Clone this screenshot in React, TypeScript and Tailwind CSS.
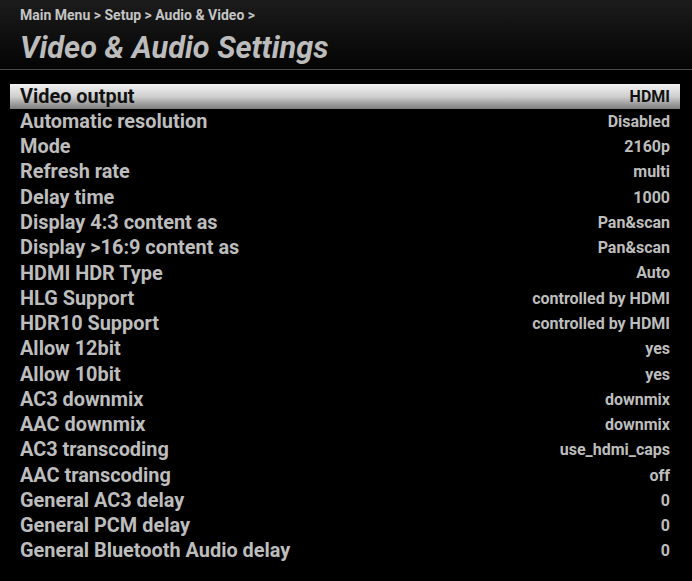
const rows: [string, string][] = [
  ["Video output", "HDMI"],
  ["Automatic resolution", "Disabled"],
  ["Mode", "2160p"],
  ["Refresh rate", "multi"],
  ["Delay time", "1000"],
  ["Display 4:3 content as", "Pan&scan"],
  ["Display >16:9 content as", "Pan&scan"],
  ["HDMI HDR Type", "Auto"],
  ["HLG Support", "controlled by HDMI"],
  ["HDR10 Support", "controlled by HDMI"],
  ["Allow 12bit", "yes"],
  ["Allow 10bit", "yes"],
  ["AC3 downmix", "downmix"],
  ["AAC downmix", "downmix"],
  ["AC3 transcoding", "use_hdmi_caps"],
  ["AAC transcoding", "off"],
  ["General AC3 delay", "0"],
  ["General PCM delay", "0"],
  ["General Bluetooth Audio delay", "0"],
];

export default function App() {
  return (
    <div className="w-[692px] h-[581px] bg-black overflow-hidden font-['Roboto',sans-serif]">
      <div className="h-[70px] bg-gradient-to-b from-[#1c1c1c] to-[#050505] border-b border-[#4a4a4a] px-[20px] pt-[6px]">
        <div className="text-[14px] font-bold text-[#c4c4c4] leading-[18px]">
          Main Menu &gt; Setup &gt; Audio &amp; Video &gt;
        </div>
        <div className="text-[30.7px] font-bold italic text-[#bcbcbc] leading-[36px] mt-[6px]">
          Video &amp; Audio Settings
        </div>
      </div>
      <div className="pt-[14px] pl-[10px] pr-[12px]">
        {rows.map(([label, value], i) => (
          <div
            key={label}
            className={
              i === 0
                ? "h-[25.28px] flex items-center justify-between px-[10px] bg-gradient-to-b from-[#f2f2f2] via-[#cfcfcf] to-[#7d7d7d] text-[#111]"
                : "h-[25.28px] flex items-center justify-between px-[10px] text-[#bdbdbd]"
            }
          >
            <span className="text-[19.9px] font-bold leading-none">{label}</span>
            <span className="text-[16px] font-bold leading-none">{value}</span>
          </div>
        ))}
      </div>
    </div>
  );
}
